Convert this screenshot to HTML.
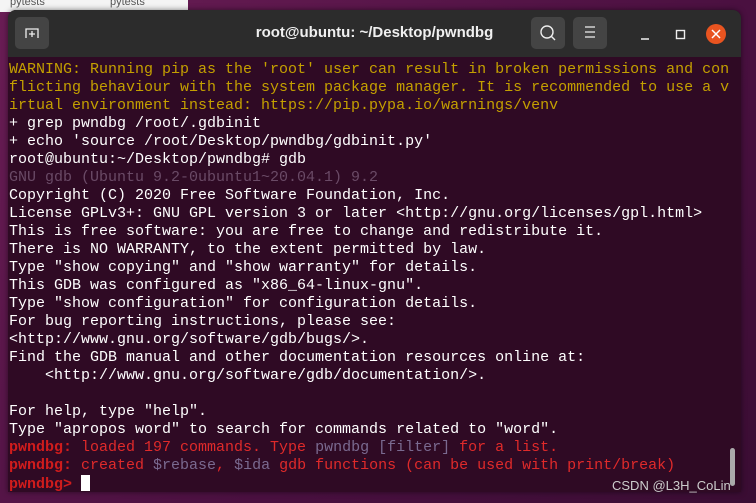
<!DOCTYPE html>
<html><head><meta charset="utf-8"><style>
html,body{margin:0;padding:0;width:756px;height:503px;overflow:hidden;background:#5a1a4a;}
body{position:relative;font-family:"Liberation Sans",sans-serif;background:linear-gradient(135deg,#6a1d55 0%,#4a1040 60%,#3a0d33 100%);}
.bgwin{position:absolute;left:0;top:0;width:188px;height:12px;background:#f4f4f4;font-size:11px;color:#555;}
.win{position:absolute;left:8px;top:10px;width:733px;height:482px;background:#2f0a24;border-radius:8px 8px 0 0;overflow:hidden;box-shadow:0 0 6px rgba(0,0,0,.5);}
.tb{height:47px;background:#2c2c2c;position:relative;color:#eee;}
.btn{position:absolute;top:7px;width:34px;height:32px;background:#444;border-radius:5px;}
.title{position:absolute;left:0;right:0;top:14px;text-align:center;font-weight:bold;font-size:15px;color:#f0f0f0;}
.term{position:absolute;left:1px;top:49px;font-family:"Liberation Mono",monospace;font-size:15px;line-height:18px;color:#fff;white-space:pre;padding-top:2px;}
.y{color:#c4a000}.g{color:#6a4a66}.r{color:#d01c1c;font-weight:bold}.rl{color:#e02a2a}.p{color:#7a6a90}
.cur{display:inline-block;width:9px;height:16px;background:#fff;vertical-align:-3px}
.sb{position:absolute;right:6px;top:438px;width:5px;height:38px;background:#aaa;border-radius:3px}
.wm{position:absolute;left:612px;top:478px;font-size:13px;color:#ccc;}
</style></head><body>
<div class="bgwin"><span style="position:absolute;left:10px;top:-4px">pytests</span><span style="position:absolute;left:110px;top:-4px">pytests</span></div>
<div class="win">
<div class="tb">
<div class="btn" style="left:7px"><svg width="34" height="32"><path d="M11 21V12h12v9M17 14v6M14 17h6" stroke="#eee" stroke-width="1.3" fill="none"/></svg></div>
<div class="title">root@ubuntu: ~/Desktop/pwndbg</div>
<div class="btn" style="left:523px"><svg width="34" height="32"><circle cx="16" cy="15" r="6" stroke="#eee" stroke-width="1.4" fill="none"/><path d="M20 19l4 4" stroke="#eee" stroke-width="1.4"/></svg></div>
<div class="btn" style="left:565px"><svg width="34" height="32"><path d="M12 10h10M12 15h10M12 20h10" stroke="#eee" stroke-width="1.3"/></svg></div>
<svg style="position:absolute;left:624px;top:10px" width="100" height="30"><path d="M9 19h8" stroke="#eee" stroke-width="1.4"/><rect x="44.5" y="10.5" width="8" height="8" stroke="#eee" stroke-width="1.4" fill="none"/><circle cx="84" cy="14" r="10" fill="#e95420"/><path d="M80 10l8 8M88 10l-8 8" stroke="#fff" stroke-width="1.5"/></svg>
</div>
<div class="term"><span class="y">WARNING: Running pip as the 'root' user can result in broken permissions and con
flicting behaviour with the system package manager. It is recommended to use a v
irtual environment instead: https://pip.pypa.io/warnings/venv</span>
+ grep pwndbg /root/.gdbinit
+ echo 'source /root/Desktop/pwndbg/gdbinit.py'
root@ubuntu:~/Desktop/pwndbg# gdb
<span class="g">GNU gdb (Ubuntu 9.2-0ubuntu1~20.04.1) 9.2</span>
Copyright (C) 2020 Free Software Foundation, Inc.
License GPLv3+: GNU GPL version 3 or later &lt;http://gnu.org/licenses/gpl.html&gt;
This is free software: you are free to change and redistribute it.
There is NO WARRANTY, to the extent permitted by law.
Type "show copying" and "show warranty" for details.
This GDB was configured as "x86_64-linux-gnu".
Type "show configuration" for configuration details.
For bug reporting instructions, please see:
&lt;http://www.gnu.org/software/gdb/bugs/&gt;.
Find the GDB manual and other documentation resources online at:
    &lt;http://www.gnu.org/software/gdb/documentation/&gt;.

For help, type "help".
Type "apropos word" to search for commands related to "word".
<span class="r">pwndbg:</span><span class="rl"> loaded 197 commands. Type </span><span class="p">pwndbg [filter]</span><span class="rl"> for a list.</span>
<span class="r">pwndbg:</span><span class="rl"> created </span><span class="p">$rebase</span><span class="rl">, </span><span class="p">$ida</span><span class="rl"> gdb functions (can be used with print/break)</span>
<span class="r">pwndbg&gt;</span> <span class="cur"></span></div>
<div class="sb"></div>
</div>
<div class="wm">CSDN @L3H_CoLin</div>
</body></html>
